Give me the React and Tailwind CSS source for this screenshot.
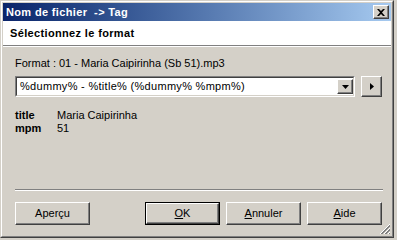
import React from 'react';

const raised =
  'border border-t-white border-l-white border-r-[#404040] border-b-[#404040] shadow-[inset_-1px_-1px_0_#808080]';

function DlgButton({ children, isDefault }) {
  if (isDefault) {
    return (
      <div className="w-[75px] h-[23px] border border-black">
        <div className={`w-full h-full flex items-center justify-center bg-[#d4d0c8] ${raised}`}>
          {children}
        </div>
      </div>
    );
  }
  return (
    <div className={`w-[75px] h-[23px] flex items-center justify-center bg-[#d4d0c8] ${raised}`}>
      {children}
    </div>
  );
}

export default function App() {
  return (
    <div
      className="w-[397px] h-[240px] bg-[#d4d0c8] text-[11px] text-black"
      style={{ fontFamily: 'Tahoma, "Liberation Sans", Arial, sans-serif' }}
    >
      {/* Window frame */}
      <div className="relative w-[394px] h-[238px] border border-t-[#d4d0c8] border-l-[#d4d0c8] border-r-[#404040] border-b-[#404040]">
        <div className="w-full h-full border border-t-white border-l-white border-r-[#808080] border-b-[#808080] p-[1px] flex flex-col">
          {/* Title bar */}
          <div className="h-[18px] flex items-center bg-linear-to-r from-[#0a246a] to-[#a6caf0] pl-[3px] pr-[2px]">
            <span className="font-bold text-white leading-none tracking-[0.35px]">Nom de fichier&nbsp; -&gt; Tag</span>
            <div className={`ml-auto w-[16px] h-[14px] bg-[#d4d0c8] flex items-center justify-center ${raised}`}>
              <svg width="8" height="7" viewBox="0 0 8 7">
                <path d="M0 0h2l2 2 2-2h2L5 3.5 8 7H6L4 5 2 7H0l3-3.5z" fill="#000" />
              </svg>
            </div>
          </div>

          {/* Header */}
          <div className="h-[25px] bg-white flex items-center pl-[7px] border-b border-[#808080]">
            <span className="font-bold tracking-[0.35px]">Sélectionnez le format</span>
          </div>
          <div className="h-[1px] bg-white" />

          {/* Body */}
          <div className="flex-1 flex flex-col pl-[12px] pt-[9px]">
            <div className="h-[14px] leading-[14px]">Format : 01 - Maria Caipirinha (Sb 51).mp3</div>

            <div className="flex items-start gap-[6px] mt-[6px]">
              <div className="w-[340px] h-[21px] border border-t-[#808080] border-l-[#808080] border-r-white border-b-white">
                <div className="w-full h-full border border-t-[#404040] border-l-[#404040] border-r-[#d4d0c8] border-b-[#d4d0c8] bg-white flex items-center">
                  <span className="pl-[3px] flex-1 tracking-[0.3px]">%dummy% - %title% (%dummy% %mpm%)</span>
                  <div className={`w-[16px] h-[15px] bg-[#d4d0c8] flex items-center justify-center ${raised}`}>
                    <svg width="7" height="4" viewBox="0 0 7 4">
                      <path d="M0 0h7L3.5 4z" fill="#000" />
                    </svg>
                  </div>
                </div>
              </div>
              <div className={`w-[21px] h-[21px] bg-[#d4d0c8] flex items-center justify-center ${raised}`}>
                <svg width="4" height="7" viewBox="0 0 4 7">
                  <path d="M0 0v7l4-3.5z" fill="#000" />
                </svg>
              </div>
            </div>

            <div className="mt-[12px] flex flex-col">
              <div className="flex h-[13px] leading-[13px]">
                <span className="w-[42px] font-bold">title</span>
                <span>Maria Caipirinha</span>
              </div>
              <div className="flex h-[13px] leading-[13px]">
                <span className="w-[42px] font-bold">mpm</span>
                <span>51</span>
              </div>
            </div>

            <div className="w-[368px] mt-auto border-t border-[#808080] border-b border-b-white" />

            <div className="w-[367px] flex mt-[11px] mb-[10px]">
              <DlgButton>Aperçu</DlgButton>
              <div className="ml-auto flex gap-[6px]">
                <DlgButton isDefault>
                  <span><span className="underline">O</span>K</span>
                </DlgButton>
                <DlgButton>
                  <span><span className="underline">A</span>nnuler</span>
                </DlgButton>
                <DlgButton>
                  <span><span className="underline">A</span>ide</span>
                </DlgButton>
              </div>
            </div>
          </div>
        </div>

        {/* Resize grip */}
        <svg className="absolute right-[2px] bottom-[2px]" width="12" height="12" viewBox="0 0 12 12">
          <path d="M11 1L1 11M11 5L5 11M11 9L9 11" stroke="#ffffff" strokeWidth="1" />
          <path d="M11 2L2 11M11 3L3 11M11 6L6 11M11 7L7 11M11 10L10 11" stroke="#808080" strokeWidth="1" />
        </svg>
      </div>
    </div>
  );
}
